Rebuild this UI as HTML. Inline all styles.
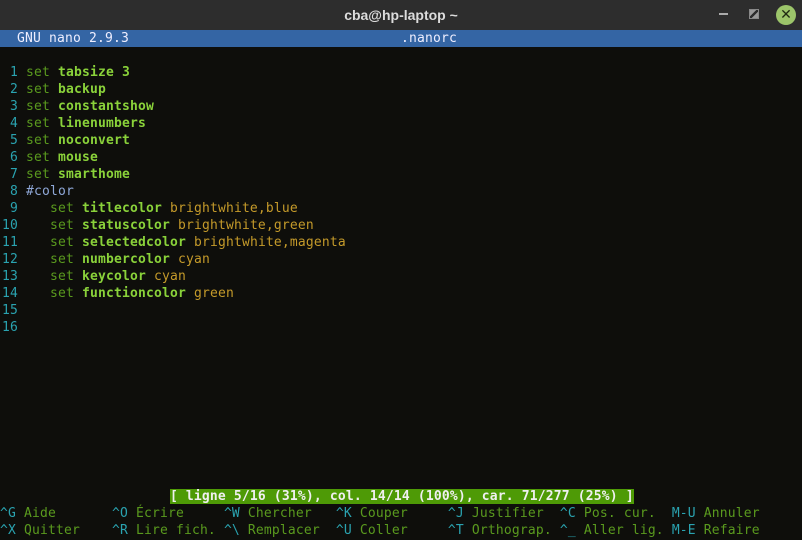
<!DOCTYPE html><html><head><style>
body{margin:0;width:802px;height:540px;background:#0e0e0b;overflow:hidden;font-family:"DejaVu Sans Mono","Liberation Mono",monospace;}
.tb{position:absolute;left:0;top:0;width:802px;height:30px;background:#2d2d2d;color:#dcdcdc;font-family:"Liberation Sans",sans-serif;font-size:14px;font-weight:bold;text-align:center;line-height:30px}
.r{position:absolute;left:0;height:17px;line-height:17px;font-size:13px;white-space:pre;letter-spacing:0.17px}
.e{left:2px}
.n{color:#2aa3b0}.s{color:#5a9a1e}.k{color:#8ad23a;font-weight:bold}.v{color:#c49a2a}.c{color:#8fa8d8}
.t{background:#3465a4;color:#eef;width:802px}
.st{background:#4e9a06;color:#f0f0f0;font-weight:bold}
.sc{color:#2aa3b0}.sl{color:#5a9a1e}
</style></head><body>
<div class="tb">cba@hp-laptop ~</div>
<div style="position:absolute;left:719px;top:13px;width:9px;height:2px;background:#aaa"></div>
<div style="position:absolute;left:749px;top:9px;width:8px;height:8px;border:1px solid #888;background:linear-gradient(135deg,#999 40%,transparent 40%,transparent 60%,#999 60%)"></div>
<div style="position:absolute;left:776px;top:5px;width:20px;height:20px;border-radius:50%;background:#9cc56a;color:#1f2a12;font:bold 14px/20px 'DejaVu Sans',sans-serif;text-align:center">✕</div>
<div class="r t" style="top:30px"><span style="position:absolute;left:17px">GNU nano 2.9.3</span><span style="position:absolute;left:401px">.nanorc</span></div>
<div class="r e" style="top:64px"><span class="n"> 1</span> <span class="s">set</span> <span class="k">tabsize 3</span></div>
<div class="r e" style="top:81px"><span class="n"> 2</span> <span class="s">set</span> <span class="k">backup</span></div>
<div class="r e" style="top:98px"><span class="n"> 3</span> <span class="s">set</span> <span class="k">constantshow</span></div>
<div class="r e" style="top:115px"><span class="n"> 4</span> <span class="s">set</span> <span class="k">linenumbers</span></div>
<div class="r e" style="top:132px"><span class="n"> 5</span> <span class="s">set</span> <span class="k">noconvert</span></div>
<div class="r e" style="top:149px"><span class="n"> 6</span> <span class="s">set</span> <span class="k">mouse</span></div>
<div class="r e" style="top:166px"><span class="n"> 7</span> <span class="s">set</span> <span class="k">smarthome</span></div>
<div class="r e" style="top:183px"><span class="n"> 8</span> <span class="c">#color</span></div>
<div class="r e" style="top:200px"><span class="n"> 9</span>    <span class="s">set</span> <span class="k">titlecolor</span> <span class="v">brightwhite,blue</span></div>
<div class="r e" style="top:217px"><span class="n">10</span>    <span class="s">set</span> <span class="k">statuscolor</span> <span class="v">brightwhite,green</span></div>
<div class="r e" style="top:234px"><span class="n">11</span>    <span class="s">set</span> <span class="k">selectedcolor</span> <span class="v">brightwhite,magenta</span></div>
<div class="r e" style="top:251px"><span class="n">12</span>    <span class="s">set</span> <span class="k">numbercolor</span> <span class="v">cyan</span></div>
<div class="r e" style="top:268px"><span class="n">13</span>    <span class="s">set</span> <span class="k">keycolor</span> <span class="v">cyan</span></div>
<div class="r e" style="top:285px"><span class="n">14</span>    <span class="s">set</span> <span class="k">functioncolor</span> <span class="v">green</span></div>
<div class="r e" style="top:302px"><span class="n">15</span></div>
<div class="r e" style="top:319px"><span class="n">16</span></div>
<div class="r" style="top:488px;left:2px">                     <span class="st">[ ligne 5/16 (31%), col. 14/14 (100%), car. 71/277 (25%) ]</span></div>
<div class="r" style="top:505px"><span class="sc">^G</span><span class="sl"> Aide       </span><span class="sc">^O</span><span class="sl"> Écrire     </span><span class="sc">^W</span><span class="sl"> Chercher   </span><span class="sc">^K</span><span class="sl"> Couper     </span><span class="sc">^J</span><span class="sl"> Justifier  </span><span class="sc">^C</span><span class="sl"> Pos. cur.  </span><span class="sc">M-U</span><span class="sl"> Annuler</span></div>
<div class="r" style="top:522px"><span class="sc">^X</span><span class="sl"> Quitter    </span><span class="sc">^R</span><span class="sl"> Lire fich. </span><span class="sc">^\</span><span class="sl"> Remplacer  </span><span class="sc">^U</span><span class="sl"> Coller     </span><span class="sc">^T</span><span class="sl"> Orthograp. </span><span class="sc">^_</span><span class="sl"> Aller lig. </span><span class="sc">M-E</span><span class="sl"> Refaire</span></div>
</body></html>
